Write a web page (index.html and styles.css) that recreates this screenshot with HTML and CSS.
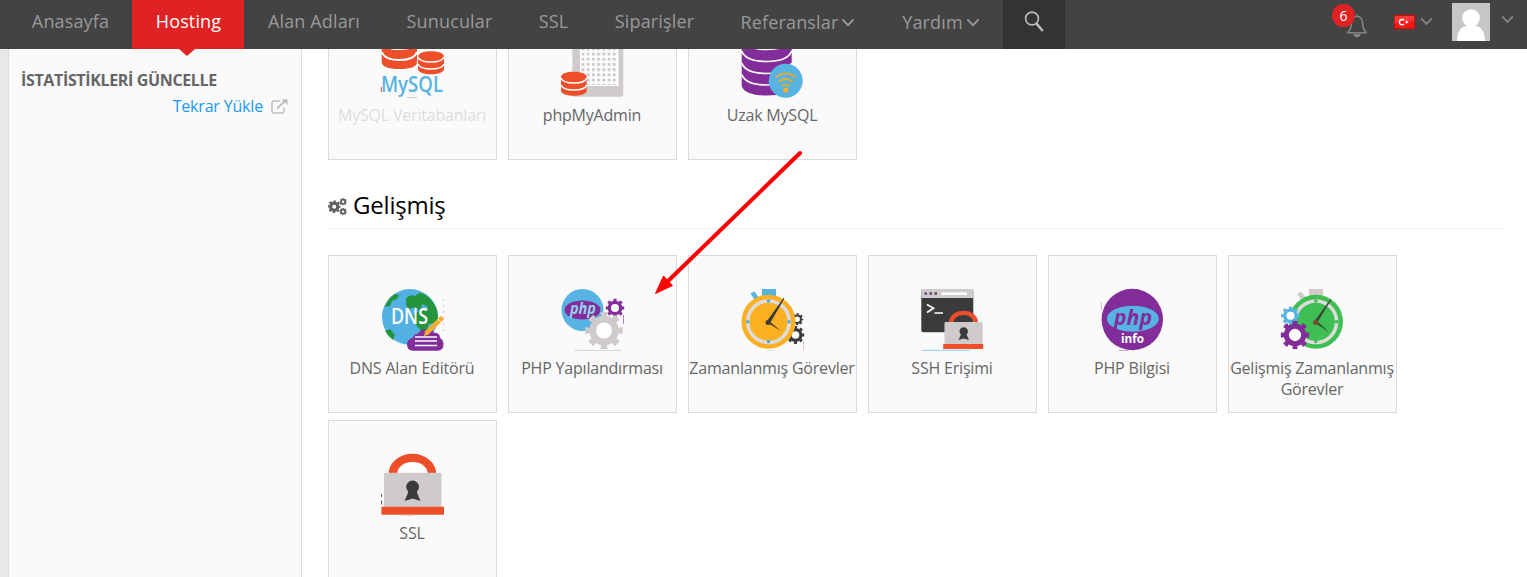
FILE: index.html
```html
<!DOCTYPE html>
<html lang="tr">
<head>
<meta charset="utf-8">
<title>Hosting</title>
<link rel="stylesheet" href="styles.css">
</head>
<body>
<svg class="defs" width="0" height="0">
  <defs>
    <symbol id="gear" viewBox="-20 -20 40 40">
      <circle r="12" fill="none" stroke="currentColor" stroke-width="7"/>
      <circle r="17" fill="none" stroke="currentColor" stroke-width="5.6" pathLength="16" stroke-dasharray="1 1" stroke-dashoffset=".5"/>
    </symbol>
    <symbol id="cog" viewBox="-20 -20 40 40">
      <circle r="11" fill="none" stroke="currentColor" stroke-width="9.5"/>
      <circle r="17" fill="none" stroke="currentColor" stroke-width="6" pathLength="16" stroke-dasharray="1.100 .9" stroke-dashoffset=".55"/>
    </symbol>
    <symbol id="chev" viewBox="0 0 12 8"><path d="M1 1.2 6 6.3 11 1.2" fill="none" stroke="currentColor" stroke-width="1.7"/></symbol>
    <pattern id="dots" width="5.2" height="5.2" patternUnits="userSpaceOnUse" x="20.5" y="1"><rect width="3" height="3" fill="#cfcbcb"/></pattern>
  </defs>
</svg>

<header class="topbar">
  <nav class="nav">
    <a class="nav-item home">Anasayfa</a>
    <a class="nav-item active">Hosting</a>
    <a class="nav-item domains">Alan Adları</a>
    <a class="nav-item servers">Sunucular</a>
    <a class="nav-item ssl">SSL</a>
    <a class="nav-item orders">Siparişler</a>
    <a class="nav-item drop refs">Referanslar<svg class="chev" width="14" height="9"><use href="#chev"/></svg></a>
    <a class="nav-item drop help">Yardım<svg class="chev" width="14" height="9"><use href="#chev"/></svg></a>
  </nav>
  <div class="search"><svg width="22" height="24" viewBox="0 0 22 24" fill="none" stroke="#bbb"><circle cx="8" cy="8.500" r="6.400" stroke-width="1.700"/><path d="M12.500 13.600 18.800 21" stroke-width="2.400"/></svg></div>
  <div class="tools">
    <div class="bell">
      <svg width="22" height="24" viewBox="0 0 22 24"><path d="M11 2.200c-4 0-5.300 3-5.500 7.200C5.300 14 4.500 16 1.500 18.800h19c-3-2.800-3.800-4.800-4-9.400C16.300 5.200 15 2.200 11 2.200zM11 2V.4" fill="none" stroke="#858585" stroke-width="1.500" stroke-linejoin="round"/><path d="M7.500 20a3.500 3.200 0 0 0 7 0z" fill="#858585"/></svg>
      <span class="badge">6</span>
    </div>
    <svg class="flag" width="21" height="14" viewBox="0 0 21 14"><rect width="21" height="14" fill="#e40000"/><rect x="1" y="1" width="19" height="12" fill="#f51616"/><path d="M1 1h19v5Q10 5 1 8z" fill="#ff5a5a" opacity=".5"/><path d="M10 5.300A2.700 2.700 0 1 0 10 9" fill="none" stroke="#fff" stroke-width="1.500"/><path d="M10.500 7l1.500-.5.600-1.400.8 1.400 1.500.5-1.500.700-.6 1.300-.8-1.300z" fill="#fff"/></svg>
    <svg class="tchev" width="13" height="9"><use href="#chev"/></svg>
    <svg class="avatar" width="38" height="38" viewBox="0 0 38 38"><rect width="38" height="38" fill="#c6c6c6"/><circle cx="19" cy="15" r="8.800" fill="#fff"/><path d="M5 38c0-8 3-14 9-15h10c6 1 9 7 9 15z" fill="#fff"/></svg>
    <svg class="tchev user" width="13" height="9"><use href="#chev"/></svg>
  </div>
</header>

<main class="page">
  <aside class="side">
    <h2 class="side-title">İSTATİSTİKLERİ GÜNCELLE</h2>
    <a class="reload">Tekrar Yükle
      <svg width="17" height="15" viewBox="0 0 17 15" fill="none" stroke="#bfbfbf"><path d="M9.500 2H3Q1 2 1 4v8q0 2 2 2h8q2 0 2-2V8.500" stroke-width="1.500"/><path d="M6 9.500 14 2" stroke-width="2"/><path d="M10.500.2H16.500V6z" fill="#bfbfbf" stroke="none"/></svg>
    </a>
  </aside>

  <section class="content">
    <div class="grid databases">
      <div class="card faded">
        <svg class="icon" width="63" height="62" viewBox="0 0 63 62">
          <path d="M.7 0H36V26Q36 33 18.500 33T.7 26z" fill="#ee4f2b"/>
          <path d="M.7 6q3 7 17.800 7T36 6M.7 16q3 8 17.800 8T36 16" fill="none" stroke="#fff" stroke-width="2"/>
          <ellipse cx="50" cy="21" rx="14" ry="7" fill="#fafafa"/><path d="M37 20.500C37 13.500 63 13.500 63 20.500V33c0 7-26 7-26 0z" fill="#ee4f2b"/>
          <path d="M37 21q2 5 13 5t13-5M37 28q2 5 13 5t13-5" fill="none" stroke="#fff" stroke-width="1.500"/>
          <text x="0" y="55.500" font-size="21" font-weight="600" textLength="62" lengthAdjust="spacingAndGlyphs" fill="#58b4e0">MySQL</text>
          <path d="M.4 51v5" stroke="#ee4f2b"/><path d="M26 61.500h10" stroke="#dcc8dc"/>
        </svg>
        <span class="label">MySQL Veritabanları</span>
      </div>
      <div class="card">
        <svg class="icon" width="63" height="62" viewBox="0 0 63 62">
          <rect x="11.300" y="-4" width="51" height="64.700" rx="2" fill="#cfcbcb"/><path d="M19 0H57.500V50H19z" fill="#fff"/><path d="M20 0H56.500V49H20z" fill="url(#dots)"/>
          <path d="M0 41C0 34 25.700 34 25.700 41V54.500c0 7-25.700 7-25.700 0z" fill="#ee4f2b"/>
          <path d="M0 42q2 5 13 5t12.700-5M0 49q2 5 13 5t12.700-5" fill="none" stroke="#fff" stroke-width="1.500"/>
        </svg>
        <span class="label">phpMyAdmin</span>
      </div>
      <div class="card">
        <svg class="icon" width="63" height="62" viewBox="0 0 63 62">
          <path d="M.7 0h50v50q-3 9.500-25 9.500T.7 50z" fill="#832d9b"/>
          <path d="M.7 3q4 10.500 25 10.500T50.700 3M.7 15q4 10.500 25 10.500T50.700 15M.7 27q4 10.500 25 10.500T50.700 27M.7 38.500q4 10.500 25 10.500T50.700 38.500" fill="none" stroke="#fff" stroke-width="1.700"/>
          <circle cx="44.700" cy="44.700" r="17" fill="#56b3e2"/>
          <path d="M34.500 41.500q10.200-8 20.400 0M37.500 46q7.200-6 14.400 0M40.700 50.200q4-3.500 8 0" fill="none" stroke="#e0ac32" stroke-width="2"/><circle cx="44.700" cy="54" r="2.600" fill="#fbb223"/>
        </svg>
        <span class="label">Uzak MySQL</span>
      </div>
    </div>

    <h1 class="section-title">
      <svg width="20" height="18" viewBox="0 0 20 18" color="#606060"><use href="#cog" x="-.3" y="2.200" width="13" height="13"/><use href="#cog" x="11.300" y="0" width="7.600" height="7.600"/><use href="#cog" x="11.300" y="9.800" width="7.600" height="7.600"/></svg>
      Gelişmiş
    </h1>

    <div class="grid">
      <div class="card">
        <svg class="icon" width="63" height="62" viewBox="0 0 63 62">
          <circle cx="29" cy="28" r="28" fill="#52b0e2"/>
          <path d="M4 18Q7 9 14 5l4 1-2 4-5 2-2 5zM25 9l5-3 4 1 4-3 4 .5Q52 10 56 21l1 8-4 5-5 1-2 6-5 2-6-7-4-4 1-6 6-4-3-4-7 2-3-4zM4 42l5-2 5 6-2 5q-5-4-8-9z" fill="#24953c"/>
          <path d="M41 15l6 3-2 4-5-3z" fill="#52b0e2"/>
          <text x="10" y="34.500" font-size="21.500" font-weight="600" textLength="37" lengthAdjust="spacingAndGlyphs" fill="#fff">DNS</text>
          <path d="M32 61.700q-6 0-6-6.500 0-5 6-6.500 1-4 5-4 3-5 9-4 5-1 7 3 6 0 6 5 3.500 2 3.500 6.500 0 6.500-6 6.500z" fill="#832d9b"/>
          <path d="M34 48h22M34 52h22M34 56.400h22" stroke="#fff" stroke-width="1.500"/>
          <path d="M45 44.500 61.500 28.500" stroke="#f8ac2b" stroke-width="4.600"/><path d="M43 47l1.200-4.500 3.200 3.300z" fill="#f8ac2b"/><path d="M57 30l3.500 3.500" stroke="#fff"/>
          <path d="M62.500 10v32" stroke="#c98bc9" stroke-dasharray="2 4" stroke-width=".6"/>
        </svg>
        <span class="label">DNS Alan Editörü</span>
      </div>
      <div class="card">
        <svg class="icon" width="63" height="62" viewBox="0 0 63 62">
          <circle cx="21.500" cy="21" r="21" fill="#56b3e2"/><ellipse cx="21.500" cy="21" rx="18" ry="9.400" fill="#832d9b"/>
          <text x="9" y="25" font-size="16" font-weight="700" font-style="italic" textLength="26" lengthAdjust="spacingAndGlyphs" fill="#8fd0ef">php</text>
          <use href="#gear" x="44.500" y="9.500" width="19" height="19" color="#832d9b"/>
          <circle cx="43" cy="41" r="11" fill="#fff"/><use href="#gear" x="24" y="22.500" width="38" height="38" color="#cfcbcb"/>
          <path d="M13 61.300h47" stroke="#d4d4d4"/><path d="M62.500 26v9" stroke="#832d9b" stroke-width=".6"/>
        </svg>
        <span class="label">PHP Yapılandırması</span>
      </div>
      <div class="card">
        <svg class="icon" width="63" height="62" viewBox="0 0 63 62">
          <use href="#gear" x="50" y="24" width="12.500" height="12.500" color="#3b3b3b"/><use href="#gear" x="45.500" y="37" width="18" height="18" color="#3b3b3b"/>
          <path d="M21 0h14v8H21zM9.500 4.500l4-2 4 6-4 2z" fill="#56b3e2"/>
          <circle cx="27.500" cy="32.700" r="27" fill="#fbb021"/><circle cx="27.500" cy="32.700" r="20.800" fill="#fbb021" stroke="#dedbdb" stroke-width="3.500"/>
          <path d="M27.500 10.500v3M27.500 51v3M5.300 32.700h3M46.500 32.700h3" stroke="#4babd8" stroke-width="3"/>
          <path d="M26 32 42.500 9l.8.700L29 34.200zM28 32l12 10-14-8.500z" fill="#3e3a36"/><circle cx="27" cy="33.500" r="2.500" fill="#3e3a36"/>
          <path d="M26 61.500h8" stroke="#cde8f6"/><path d="M62.500 52v9" stroke="#e6a0a0" stroke-width=".6"/>
        </svg>
        <span class="label">Zamanlanmış Görevler</span>
      </div>
      <div class="card">
        <svg class="icon" width="63" height="62" viewBox="0 0 63 62">
          <rect x=".3" y=".3" width="52" height="43" rx="2" fill="#3b3b3b"/><path d="M.3 9V2q0-2 2-2h48q2 0 2 2v7z" fill="#cfcbcb"/>
          <path d="M3.500 4.500h2.500M8.500 4.500H11M13.500 4.500H16" stroke="#64407a" stroke-width="2.500"/><path d="M20.500 4.600H46" stroke="#fff" stroke-width="2.500"/>
          <path d="M6 15.500l6.500 3.700L6 23.500M13.500 24H22" fill="none" stroke="#fff" stroke-width="1.700"/>
          <path d="M30 34a12.300 10 0 0 1 25 0" fill="none" stroke="#ee4f2b" stroke-width="4.400"/>
          <rect x="23.500" y="33" width="38.200" height="22.500" rx="1" fill="#cfcbcb"/><path d="M22.200 55h40v5h-40z" fill="#ee4f2b"/>
          <circle cx="42.700" cy="42.400" r="4.200" fill="#3b3b3b"/><path d="M41 43h3.400l3.600 8-5.300-1.500L37.500 51z" fill="#3b3b3b"/>
          <path d="M1 61.300H49" stroke="#8fcdf0"/>
        </svg>
        <span class="label">SSH Erişimi</span>
      </div>
      <div class="card">
        <svg class="icon" width="63" height="62" viewBox="0 0 63 62">
          <circle cx="31.300" cy="30.500" r="30.700" fill="#832d9b"/><ellipse cx="31.800" cy="29.800" rx="26" ry="13" fill="#56b3e2"/>
          <text x="13" y="35.500" font-size="21" font-weight="700" font-style="italic" textLength="38" lengthAdjust="spacingAndGlyphs" fill="#832d9b">php</text>
          <text x="20" y="54" font-size="12" font-weight="700" textLength="23" lengthAdjust="spacingAndGlyphs" fill="#fff">info</text>
          <path d="M.4 13v8M18 61.500h10" stroke="#c38fca" stroke-width=".7"/>
        </svg>
        <span class="label">PHP Bilgisi</span>
      </div>
      <div class="card">
        <svg class="icon" width="63" height="62" viewBox="0 0 63 62">
          <path d="M28 0h14v8H28zM16 5l4-2.500 5 6-4 3z" fill="#cfcbcb"/>
          <circle cx="35" cy="32.700" r="27" fill="#3fbf53"/><circle cx="34.800" cy="32.700" r="20.800" fill="#3fbf53" stroke="#dedbdb" stroke-width="3.500"/>
          <path d="M34.800 10.500v3M34.800 51v3M54 32.700h3" stroke="#3fbf53" stroke-width="3"/>
          <path d="M33.500 32 49.500 10l.8.700L36 34zM36 32l12 11-14-9z" fill="#3b4a38"/><circle cx="34.500" cy="33.500" r="2.500" fill="#7b4a32"/>
          <circle cx="9.500" cy="26.800" r="6" fill="#fff"/><use href="#gear" x="0" y="17.300" width="19" height="19" color="#56b3e2"/>
          <circle cx="14" cy="46" r="9" fill="#fff"/><use href="#gear" x="-.5" y="31.500" width="29" height="29" color="#832d9b"/>
        </svg>
        <span class="label">Gelişmiş Zamanlanmış Görevler</span>
      </div>
      <div class="card">
        <svg class="icon" width="63" height="62" viewBox="0 0 63 62">
          <path d="M12 20a19.300 15.700 0 0 1 38.800 0" fill="none" stroke="#ee4f2b" stroke-width="8.800"/><path d="M16.500 19a15 11 0 0 1 30 0z" fill="#fff"/>
          <rect x="3" y="18.700" width="57.500" height="35" rx="1.500" fill="#cfcbcb"/><path d="M.4 52.700h62.600v8H.4z" fill="#ee4f2b"/>
          <circle cx="31.600" cy="33" r="6.400" fill="#3b3b3b"/><path d="M28.600 35h6l4.800 12-7.800-2.500-8 2.500z" fill="#3b3b3b"/>
          <path d="M.6 40v3M.6 46.500v4" stroke="#555"/><path d="M20 61.300h12" stroke="#d9b8d0" stroke-width=".7"/>
        </svg>
        <span class="label">SSL</span>
      </div>
    </div>
  </section>
</main>

<svg class="pointer" width="150" height="148" viewBox="0 0 150 148"><path d="M147 3 14 132" stroke="#fe0000" stroke-width="4" stroke-linecap="round"/><path d="M2.500 143.500 10.500 126 19.500 135.500z" fill="#fe0000" stroke="#fe0000"/></svg>
</body>
</html>
```
FILE: styles.css
```css
* { box-sizing: border-box; }
body {
  margin: 0;
  height: 577px;
  overflow: hidden;
  background: #fff;
  color: #666;
  font-family: "Open Sans", sans-serif;
  font-size: 16px;
}
.defs { position: absolute; }

.topbar {
  position: fixed;
  inset: 0 0 auto 0;
  z-index: 2;
  display: flex;
  height: 49px;
  padding-left: 8px;
  background: #434343;
}
.nav { display: flex; }
.nav-item {
  display: flex;
  justify-content: center;
  height: 49px;
  padding-left: 1px;
  color: #999;
  font-size: 18px;
  line-height: 43px;
  letter-spacing: .15px;
  white-space: nowrap;
}
.home { width: 124px; }
.active {
  position: relative;
  width: 112px;
  background: #e02222;
  color: #fff;
}
.active::after {
  content: "";
  position: absolute;
  left: 47px;
  top: 49px;
  border: 8px solid transparent;
  border-top: 7px solid #e02222;
  border-bottom: 0;
}
.domains { width: 139px; }
.servers { width: 132px; }
.ssl { width: 76px; }
.orders { width: 126px; }
.refs { width: 162px; }
.help { width: 124px; }
.drop { padding-left: 0; line-height: 45px; }
.chev { margin: 18px 0 0 3px; }
.search {
  width: 62px;
  padding: 10px 0 0 21px;
  background: #333;
}
.tools {
  display: flex;
  align-items: flex-start;
  margin-left: auto;
  padding-right: 13px;
  color: #858585;
}
.bell {
  position: relative;
  margin: 14px 26px 0 0;
  width: 22px;
}
.bell svg, .search svg { display: block; }
.badge {
  position: absolute;
  left: -14px;
  top: -10px;
  width: 23px;
  height: 23px;
  border-radius: 50%;
  background: #e02222;
  color: #fff;
  font-size: 14px;
  line-height: 24px;
  text-align: center;
}
.flag { margin-top: 15px; }
.tchev { margin: 17px 0 0 5px; }
.avatar { margin: 3px 0 0 19px; }
.tchev.user { margin: 15px 0 0 11px; }

.page {
  display: flex;
  height: 577px;
  border-left: 8px solid #e8e8e8;
}
.side {
  width: 294px;
  padding: 69px 13px 0 12px;
  border: solid #ddd;
  border-width: 0 1px;
  background: #fafafa;
}
.side-title {
  margin: 0;
  font-size: 16px;
  line-height: 22px;
  font-weight: 700;
  letter-spacing: -.35px;
  white-space: nowrap;
}
.reload {
  display: flex;
  justify-content: flex-end;
  align-items: center;
  gap: 8px;
  margin-top: 4px;
  color: #189bf1;
  line-height: 22px;
  letter-spacing: -.18px;
}
.content {
  flex: 1;
  padding: 2px 25px 0 26px;
}
.grid {
  display: grid;
  grid-template-columns: repeat(6, 169px);
  grid-auto-rows: 158px;
  gap: 7px 11px;
}
.card {
  display: flex;
  flex-direction: column;
  align-items: center;
  padding-top: 33px;
  border: 1px solid #dadada;
  background: #fafafa;
}
.icon { display: block; flex: none; overflow: visible; }
.label {
  margin: 7px 1px 0 0;
  line-height: 21px;
  letter-spacing: -.2px;
  text-align: center;
}
.faded .label { color: #ddd; }
.section-title {
  display: flex;
  align-items: center;
  gap: 5px;
  height: 49px;
  margin: 20px 0 26px;
  border-bottom: 1px solid #eee;
  color: #000;
  font-size: 24px;
  font-weight: 400;
  letter-spacing: -.2px;
}
.section-title svg { margin-top: 5px; }
.pointer {
  position: absolute;
  left: 653px;
  top: 150px;
  z-index: 3;
}
```
